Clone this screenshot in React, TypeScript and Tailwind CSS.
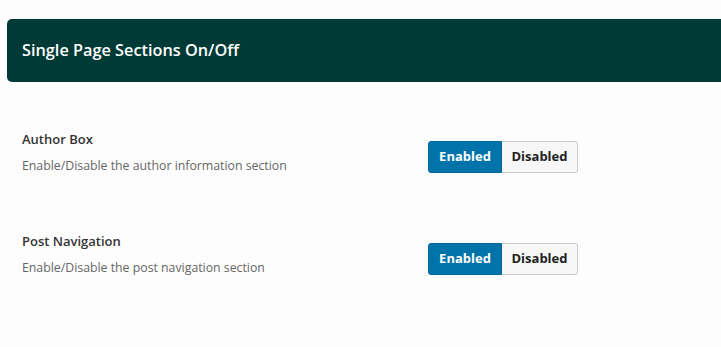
import React from "react";

function Toggle() {
  return (
    <div className="mt-[11px] flex h-[32px] text-[13px] font-bold">
      <div className="flex w-[74px] items-center justify-center rounded-l-[3px] border border-[#006799] bg-[#0073aa] text-white">
        Enabled
      </div>
      <div className="flex w-[76px] items-center justify-center rounded-r-[3px] border border-l-0 border-[#cccccc] bg-[#f7f7f7] text-[#222]">
        Disabled
      </div>
    </div>
  );
}

function Row({ title, desc }: { title: string; desc: string }) {
  return (
    <div className="flex items-start">
      <div className="w-[406px]">
        <div className="text-[13px] font-semibold leading-[18px] text-[#333]">{title}</div>
        <div className="mt-[9px] text-[12.3px] leading-[18px] text-[#666]">{desc}</div>
      </div>
      <Toggle />
    </div>
  );
}

export default function App() {
  return (
    <div className="h-[347px] w-[721px] overflow-hidden bg-[#fdfdfd] pt-[19px] pl-[7px]" style={{ fontFamily: '"Open Sans", "Noto Sans", sans-serif' }}>
      <div className="flex h-[63px] w-[730px] items-center rounded-l-[5px] bg-[#003a37] pl-[15px] text-[16.3px] font-semibold text-white">
        Single Page Sections On/Off
      </div>
      <div className="mt-[48px] flex flex-col gap-[57px] pl-[15px]">
        <Row title="Author Box" desc="Enable/Disable the author information section" />
        <Row title="Post Navigation" desc="Enable/Disable the post navigation section" />
      </div>
    </div>
  );
}
